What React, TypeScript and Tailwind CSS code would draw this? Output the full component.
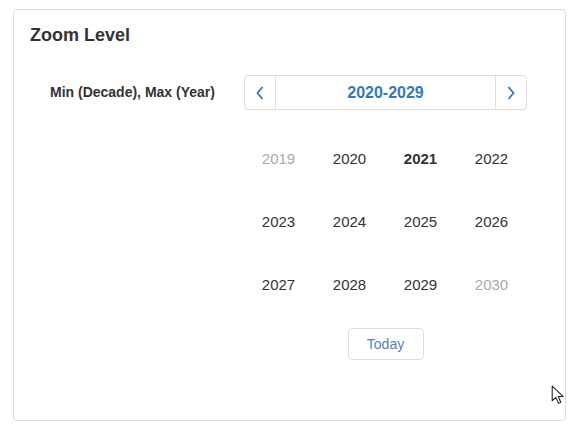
import React from 'react';

const years = [
  { y: 2019, muted: true },
  { y: 2020 },
  { y: 2021, current: true },
  { y: 2022 },
  { y: 2023 },
  { y: 2024 },
  { y: 2025 },
  { y: 2026 },
  { y: 2027 },
  { y: 2028 },
  { y: 2029 },
  { y: 2030, muted: true },
];

const Chevron = ({ dir }: { dir: 'left' | 'right' }) => (
  <svg width="10" height="16" viewBox="0 0 10 16" fill="none">
    <path
      d={dir === 'left' ? 'M7.5 2 L2.5 8 L7.5 14' : 'M2.5 2 L7.5 8 L2.5 14'}
      stroke="#337ab7"
      strokeWidth="1.8"
    />
  </svg>
);

export default function App() {
  return (
    <div className="w-[581px] h-[430px] bg-white pt-[9px] pl-[13px] relative" style={{ fontFamily: '"Liberation Sans", Arial, sans-serif' }}>
      <div className="w-[553px] h-[412px] border border-[#dddddd] rounded-[4px] px-4 pt-[14px]">
        {/* Title */}
        <h3 className="text-[18px] font-bold text-[#333333] leading-[22px]">Zoom Level</h3>

        <div className="flex mt-[29px]">
          <div className="w-[214px] pl-5 pt-[7px] text-[14px] font-bold text-[#333333] leading-[20px]">
            Min (Decade), Max (Year)
          </div>

          {/* Calendar */}
          <div className="w-[283px]">
            <div className="flex h-[35px] border border-[#dddddd] rounded-[4px]">
              <button className="w-[31px] flex items-center justify-center border-r border-[#dddddd]">
                <Chevron dir="left" />
              </button>
              <div className="flex-1 flex items-center justify-center text-[16px] font-bold text-[#337ab7]">
                2020-2029
              </div>
              <button className="w-[31px] flex items-center justify-center border-l border-[#dddddd]">
                <Chevron dir="right" />
              </button>
            </div>

            <div className="grid grid-cols-4 mt-[18px] -ml-px">
              {years.map((item) => (
                <div
                  key={item.y}
                  className={`h-[63px] flex items-center justify-center text-[15px] ${
                    item.muted ? 'text-[#aaaaaa]' : 'text-[#333333]'
                  } ${item.current ? 'font-bold' : ''}`}
                >
                  {item.y}
                </div>
              ))}
            </div>

            <div className="flex justify-center mt-[11px]">
              <button className="w-[76px] h-[32px] border border-[#dddddd] rounded-[4px] text-[14px] text-[#5a7fb8] bg-white">
                Today
              </button>
            </div>
          </div>
        </div>
      </div>

      {/* mouse cursor */}
      <svg className="absolute left-[551px] top-[385px]" width="15" height="21" viewBox="0 0 14 20">
        <path d="M1 1 L1 15 L4.5 11.8 L7 17.5 L9.2 16.5 L6.8 11 L11.5 11 Z" fill="white" stroke="#222" strokeWidth="1" strokeLinejoin="round" />
      </svg>
    </div>
  );
}
